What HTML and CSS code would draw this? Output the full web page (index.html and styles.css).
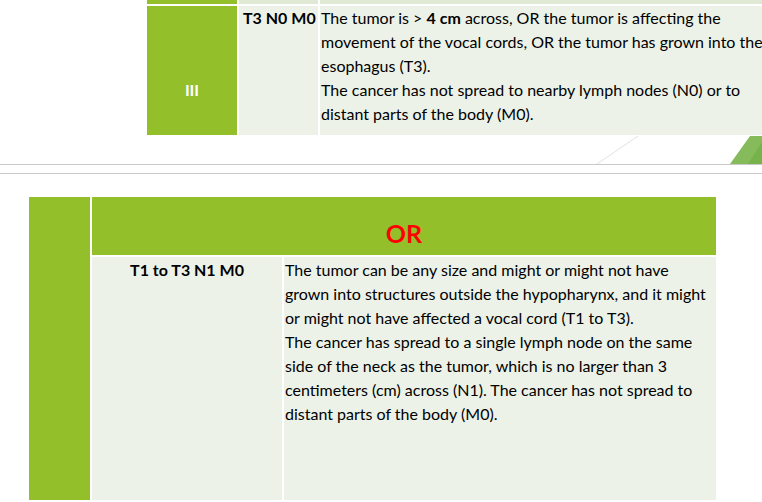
FILE: index.html
```html
<!DOCTYPE html>
<html>
<head>
<meta charset="utf-8">
<link rel="stylesheet" href="styles.css">
</head>
<body>
<div class="slide slide-top">
  <div class="table-top">
    <div class="cell green strip"></div>
    <div class="cell band strip"></div>
    <div class="cell band strip"></div>
    <div class="cell green stage"><span>III</span></div>
    <div class="cell light code">T3 N0 M0</div>
    <div class="cell light desc">The tumor is &gt; <b>4 cm</b> across, OR the tumor is affecting the<br>movement of the vocal cords, OR the tumor has grown into the<br>esophagus (T3).<br>The cancer has not spread to nearby lymph nodes (N0) or to<br>distant parts of the body (M0).</div>
  </div>
  <svg class="deco" width="762" height="164" viewBox="0 0 762 164">
    <line x1="597" y1="164" x2="638" y2="136" stroke="#e2e2e2" stroke-width="1"/>
    <polygon points="730,164 750,136 762,136 762,164" fill="#86bb5c"/>
    <polygon points="748,164 762,142 762,164" fill="#78b24a"/>
  </svg>
</div>
<div class="slide slide-bottom">
  <div class="table-bottom">
    <div class="cell green side"></div>
    <div class="right">
      <div class="cell green header"><span class="or">OR</span></div>
      <div class="row">
        <div class="cell light code2">T1 to T3 N1 M0</div>
        <div class="cell light desc2">The tumor can be any size and might or might not have<br>grown into structures outside the hypopharynx, and it might<br>or might not have affected a vocal cord (T1 to T3).<br>The cancer has spread to a single lymph node on the same<br>side of the neck as the tumor, which is no larger than 3<br>centimeters (cm) across (N1). The cancer has not spread to<br>distant parts of the body (M0).</div>
      </div>
    </div>
  </div>
</div>
</body>
</html>
```

FILE: styles.css
```css
html, body {
  margin: 0;
  padding: 0;
  background: #ffffff;
  overflow: hidden;
}
body {
  width: 762px;
  height: 502px;
  font-family: Lato, "Liberation Sans", sans-serif;
  font-size: 16px;
  color: #000000;
}
.slide {
  position: relative;
  overflow: hidden;
}
.slide-top {
  height: 164px;
  border-bottom: 1px solid #c9c9c9;
}
.slide-bottom {
  margin-top: 8px;
  border-top: 1px solid #c9c9c9;
  padding-top: 23px;
  height: 305px;
}
.table-top {
  display: grid;
  grid-template-columns: 90px 79px 480px;
  grid-template-rows: 4px 129px;
  gap: 2px;
  margin-left: 147px;
}
.green { background: #93c02a; }
.light { background: #ecf2e8; }
.band { background: #dfe9d3; }
.cell { line-height: 24px; }
.stage {
  display: flex;
  justify-content: center;
  align-items: center;
  padding-top: 38px;
  color: #ffffff;
  font-size: 16px;
  font-weight: bold;
}
.code {
  font-weight: bold;
  padding-left: 4px;
  white-space: nowrap;
}
.desc {
  padding-left: 1px;
  white-space: nowrap;
}
.deco {
  position: absolute;
  left: 0;
  top: 0;
  pointer-events: none;
}
.table-bottom {
  display: grid;
  grid-template-columns: 61px 624px;
  gap: 2px;
  margin-left: 29px;
  height: 303px;
}
.right {
  display: grid;
  grid-template-rows: 58px 243px;
  gap: 2px;
}
.header {
  display: flex;
  justify-content: center;
  align-items: center;
  padding-top: 14px;
}
.or {
  color: #ff0000;
  font-weight: bold;
  font-size: 25px;
}
.row {
  display: grid;
  grid-template-columns: 190px 432px;
  gap: 2px;
}
.code2 {
  font-weight: bold;
  text-align: center;
  padding-top: 1px;
}
.desc2 {
  padding-top: 1px;
  padding-left: 1px;
  white-space: nowrap;
}
```
